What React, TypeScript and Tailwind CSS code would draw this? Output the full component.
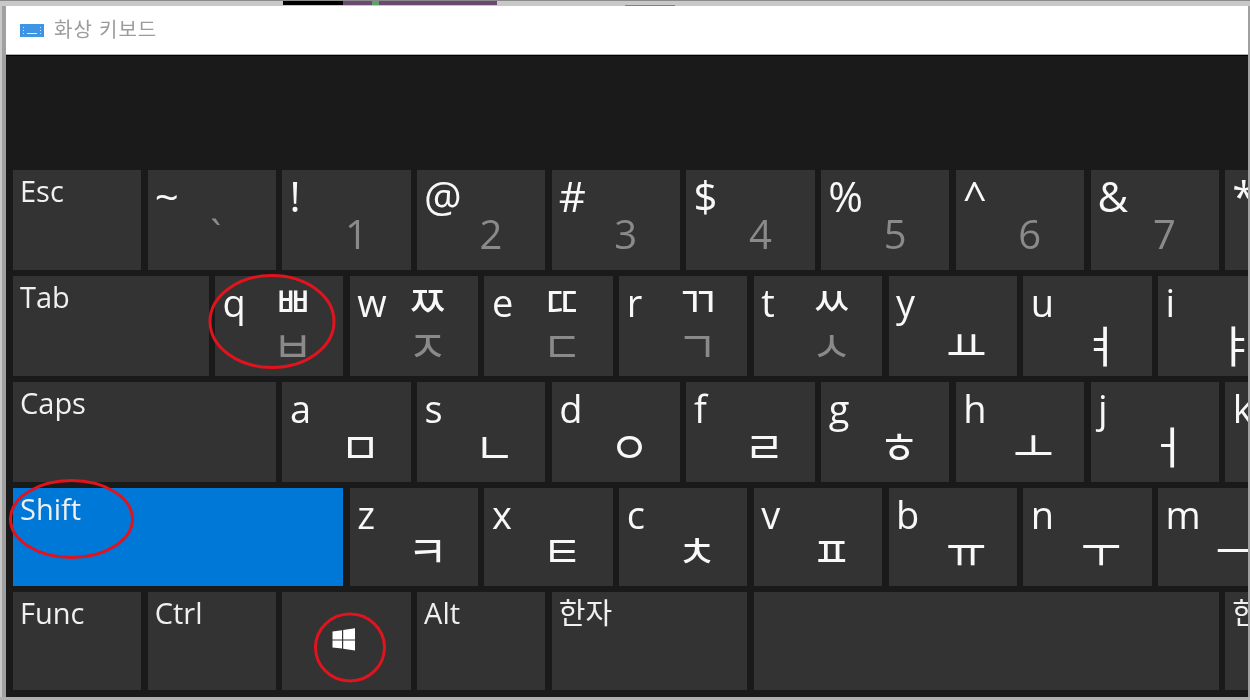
type KeyProps = {
  label?: string
  shifted?: string
  sub?: string
  width?: string
  kind?: "name" | "num" | "letter"
  rows?: string
  active?: boolean
}

const numberKeys = [
  ["~", "`"],
  ["!", "1"],
  ["@", "2"],
  ["#", "3"],
  ["$", "4"],
  ["%", "5"],
  ["^", "6"],
  ["&", "7"],
  ["*", "8"],
]

const topLetters = [
  ["q", "ㅃ", "ㅂ"],
  ["w", "ㅉ", "ㅈ"],
  ["e", "ㄸ", "ㄷ"],
  ["r", "ㄲ", "ㄱ"],
  ["t", "ㅆ", "ㅅ"],
  ["y", "", "ㅛ"],
  ["u", "", "ㅕ"],
  ["i", "", "ㅑ"],
]

const homeLetters = [
  ["a", "ㅁ"],
  ["s", "ㄴ"],
  ["d", "ㅇ"],
  ["f", "ㄹ"],
  ["g", "ㅎ"],
  ["h", "ㅗ"],
  ["j", "ㅓ"],
  ["k", "ㅏ"],
]

const bottomLetters = [
  ["z", "ㅋ"],
  ["x", "ㅌ"],
  ["c", "ㅊ"],
  ["v", "ㅍ"],
  ["b", "ㅠ"],
  ["n", "ㅜ"],
  ["m", "ㅡ"],
]

function Key({ label, shifted, sub, width = "w-[128.3px]", kind = "name", rows = "grid-rows-[48px_1fr]", active }: KeyProps) {
  const bg = active ? "bg-[#0078d7]" : "bg-[#333333]"

  if (kind === "name") {
    return (
      <div className={`${width} h-full shrink-0 ${bg} pl-[7px] pt-[1px]`}>
        <span className="block whitespace-nowrap text-[29px] leading-[40px] text-[#f0f0f0]">{label}</span>
      </div>
    )
  }

  if (kind === "num") {
    return (
      <div className={`${width} h-full shrink-0 ${bg} grid grid-cols-[62.5px_1fr] grid-rows-[38px_1fr] pl-[7px] pt-[2px]`}>
        <span className="text-[42px] leading-[48px] text-[#f8f8f8]">{label}</span>
        <span />
        <span />
        <span className="-ml-[7px] text-[40px] leading-[48px] text-[#8a8a8a]">{sub}</span>
      </div>
    )
  }

  return (
    <div className={`${width} h-full shrink-0 ${bg} grid grid-cols-[50px_1fr] ${rows} pl-[7.5px]`}>
      <span className="text-[38px] leading-[52px] text-[#f8f8f8]">{label}</span>
      <span className="pt-[3px] text-[44px] leading-[44px] text-[#f8f8f8]">{shifted}</span>
      <span />
      <span className={`text-[44px] leading-[44px] ${shifted ? "text-[#8a8a8a]" : "text-[#f8f8f8]"}`}>{sub}</span>
    </div>
  )
}

function KeyboardIcon() {
  return (
    <svg width="24" height="13" viewBox="0 0 24 13" className="shrink-0">
      <rect width="24" height="13" fill="#3f94e4" />
      <path d="M3 3h1v1H3zM3 6h1v1H3zM20 3h1v1h-1zM20 6h1v1h-1zM3 9h1v1H3zM20 9h1v1h-1z" fill="#cfe4f8" />
      <rect x="7" y="9" width="10" height="1" fill="#e4f0fb" />
    </svg>
  )
}

function WindowsIcon() {
  return (
    <svg width="24" height="23" viewBox="0 0 24 23" className="ml-[50px] mt-[36px]" fill="#ffffff">
      <polygon points="0.5,3.6 10,2.2 10,11.4 0.5,11.4" />
      <polygon points="11.2,2 23,0.3 23,11.4 11.2,11.4" />
      <polygon points="0.5,12.6 10,12.6 10,20.6 0.5,19.4" />
      <polygon points="11.2,12.6 23,12.6 23,22.4 11.2,20.8" />
    </svg>
  )
}

export default function App() {
  return (
    <div
      className="relative flex h-[700px] w-[1250px] flex-col overflow-hidden bg-[#b8b8b8] blur-[0.4px]"
      style={{ fontFamily: '"Open Sans", "Noto Sans CJK KR", sans-serif' }}
    >
      {/* strip of the window behind */}
      <div className="flex h-[6px] shrink-0 border-t border-[#8a8a8a] bg-[#c8c8c8]">
        <div className="w-[283px]" />
        <div className="h-[4px] w-[60px] bg-black" />
        <div className="flex h-[4px] w-[154px] bg-[#6b4a72]">
          <div className="ml-[29px] h-[4px] w-[7px] bg-[#5fa06a]" />
        </div>
        <div className="ml-[128px] mt-[4px] h-px w-[50px] bg-[#b07060]" />
      </div>

      <div className="flex min-h-0 flex-1">
        <div className="w-[6px] shrink-0 border-l-2 border-[#c8c8c8] bg-[#a0a0a0]" />

        <div className="flex min-w-0 flex-1 flex-col">
          <header className="flex h-[49px] shrink-0 items-center gap-[10px] border-b border-[#b0b0b0] bg-white pl-[14px]">
            <KeyboardIcon />
            <span className="text-[20px] leading-none tracking-[1px] text-[#9c9c9c]">화상 키보드</span>
          </header>

          <main className="flex flex-1 flex-col gap-[6px] overflow-hidden border-t border-black bg-[#1a1a1a] pl-[7px] pt-[114px]">
            <div className="flex h-[100px] gap-[6.4px]">
              <Key label="Esc" />
              {numberKeys.map(([label, sub]) => (
                <Key key={label} kind="num" label={label} sub={sub} />
              ))}
            </div>

            <div className="flex h-[100px] gap-[6.4px]">
              <Key label="Tab" width="w-[195.7px]" />
              {topLetters.map(([label, shifted, sub]) => (
                <Key key={label} kind="letter" label={label} shifted={shifted} sub={sub} rows="grid-rows-[48px_1fr]" />
              ))}
            </div>

            <div className="flex h-[100px] gap-[6.4px]">
              <Key label="Caps" width="w-[263px]" />
              {homeLetters.map(([label, sub]) => (
                <Key key={label} kind="letter" label={label} sub={sub} rows="grid-rows-[43px_1fr]" />
              ))}
            </div>

            <div className="flex h-[98px] gap-[6.4px]">
              <Key label="Shift" width="w-[330.4px]" active />
              {bottomLetters.map(([label, sub]) => (
                <Key key={label} kind="letter" label={label} sub={sub} rows="grid-rows-[41px_1fr]" />
              ))}
            </div>

            <div className="flex h-[98px] gap-[6.4px]">
              <Key label="Func" />
              <Key label="Ctrl" />
              <div className="h-full w-[128.3px] shrink-0 bg-[#333333]">
                <WindowsIcon />
              </div>
              <Key label="Alt" />
              <Key label="한자" width="w-[195.7px]" />
              <Key width="w-[465px]" />
              <Key label="한영" />
            </div>
          </main>
        </div>

        <div className="w-[2px] shrink-0 bg-[#a0a0a0]" />
      </div>

      <div className="h-[3px] shrink-0 bg-[#b0b0b0]" />

      {/* red annotation circles */}
      <svg className="pointer-events-none absolute inset-0" width="1250" height="700" fill="none" stroke="#e0141e" strokeWidth="3">
        <ellipse cx="272" cy="321.5" rx="62" ry="46" />
        <ellipse cx="71.5" cy="519" rx="61" ry="38.5" />
        <ellipse cx="350" cy="647.5" rx="34.5" ry="33.5" />
      </svg>
    </div>
  )
}
